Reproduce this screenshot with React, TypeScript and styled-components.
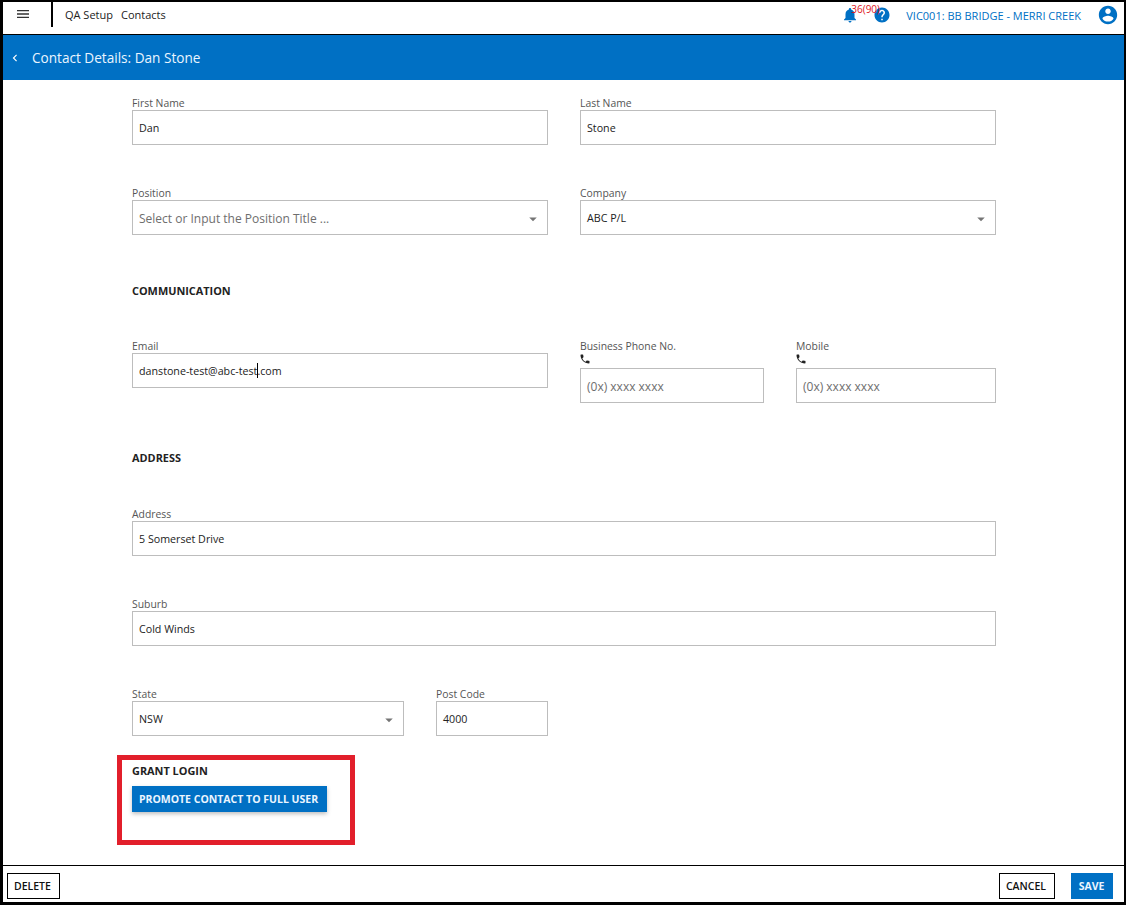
import React from 'react';
import styled, { createGlobalStyle } from 'styled-components';

const BLUE = '#0070c4';

const GlobalStyle = createGlobalStyle`
    html, body {
        margin: 0;
        padding: 0;
        background: #fff;
    }
    body {
        font-family: "Open Sans", "Noto Sans", "Liberation Sans", sans-serif;
        color: #222;
    }
`;

const icons = {
    menu: 'M3 18h18v-2H3v2zm0-5h18v-2H3v2zm0-7v2h18V6H3z',
    bell: 'M12 22c1.1 0 2-.9 2-2h-4c0 1.1.9 2 2 2zm6-6v-5c0-3.07-1.63-5.64-4.5-6.32V4c0-.83-.67-1.5-1.5-1.5s-1.5.67-1.5 1.5v.68C7.64 5.36 6 7.92 6 11v5l-2 2v1h16v-1l-2-2z',
    help: 'M12 2C6.48 2 2 6.48 2 12s4.48 10 10 10 10-4.48 10-10S17.52 2 12 2zm1 17h-2v-2h2v2zm2.07-7.75l-.9.92C13.45 12.9 13 13.5 13 15h-2v-.5c0-1.1.45-2.1 1.17-2.83l1.24-1.26c.37-.36.59-.86.59-1.41 0-1.1-.9-2-2-2s-2 .9-2 2H8c0-2.21 1.79-4 4-4s4 1.79 4 4c0 .88-.36 1.68-.93 2.25z',
    account: 'M12 2C6.48 2 2 6.48 2 12s4.48 10 10 10 10-4.48 10-10S17.52 2 12 2zm0 3c1.66 0 3 1.34 3 3s-1.34 3-3 3-3-1.34-3-3 1.34-3 3-3zm0 14.2c-2.5 0-4.71-1.28-6-3.22.03-1.99 4-3.08 6-3.08 1.99 0 5.97 1.09 6 3.08-1.29 1.94-3.5 3.22-6 3.22z',
    phone: 'M6.62 10.79c1.44 2.83 3.76 5.14 6.59 6.59l2.2-2.2c.27-.27.67-.36 1.02-.24 1.12.37 2.33.57 3.57.57.55 0 1 .45 1 1V20c0 .55-.45 1-1 1-9.39 0-17-7.61-17-17 0-.55.45-1 1-1h3.5c.55 0 1 .45 1 1 0 1.25.2 2.45.57 3.57.11.35.03.74-.25 1.02l-2.2 2.2z',
    back: 'M15.41 7.41L14 6l-6 6 6 6 1.41-1.41L10.83 12z',
    caret: 'M7 10l5 5 5-5z',
};

const Icon: React.FC<{ name: keyof typeof icons; size: number; color: string }> = ({ name, size, color }) => (
    <svg width={size} height={size} viewBox="0 0 24 24" fill={color} style={{ display: 'block' }}>
        <path d={icons[name]} />
    </svg>
);

const Field: React.FC<{
    label: string;
    value?: string;
    placeholder?: string;
    select?: boolean;
    phone?: boolean;
    width?: number;
    caretAfter?: string;
}> = ({ label, value, placeholder, select, phone, width, caretAfter }) => (
    <FieldWrap $width={width}>
        <Label>{label}</Label>
        {phone && (
            <PhoneMark>
                <Icon name="phone" size={12} color="#222" />
            </PhoneMark>
        )}
        <InputBox>
            {placeholder ? (
                <Placeholder>{placeholder}</Placeholder>
            ) : (
                <Value>
                    {caretAfter}
                    {caretAfter && <TextCaret />}
                    {value}
                </Value>
            )}
            {select && (
                <SelectMark>
                    <Icon name="caret" size={18} color="#757575" />
                </SelectMark>
            )}
        </InputBox>
    </FieldWrap>
);

const App: React.FC = () => (
    <>
        <GlobalStyle />
        <Frame>
            <TopBar>
                <MenuCell>
                    <Icon name="menu" size={16} color="#333" />
                </MenuCell>
                <Crumb>QA Setup</Crumb>
                <Crumb>Contacts</Crumb>
                <TopRight>
                    <BellWrap>
                        <Icon name="bell" size={18} color={BLUE} />
                        <BellCount>36(90)</BellCount>
                    </BellWrap>
                    <Icon name="help" size={18} color={BLUE} />
                    <SiteName>VIC001: BB BRIDGE - MERRI CREEK</SiteName>
                    <Icon name="account" size={22} color={BLUE} />
                </TopRight>
            </TopBar>
            <TitleBar>
                <Icon name="back" size={14} color="#fff" />
                <Title>Contact Details: Dan Stone</Title>
            </TitleBar>
            <Content>
                <Row $mb={42}>
                    <Field label="First Name" value="Dan" />
                    <Field label="Last Name" value="Stone" />
                </Row>
                <Row $mb={49}>
                    <Field label="Position" placeholder="Select or Input the Position Title ..." select />
                    <Field label="Company" value="ABC P/L" select />
                </Row>
                <SectionTitle $mb={42}>COMMUNICATION</SectionTitle>
                <Row $mb={48}>
                    <Field label="Email" value=".com" caretAfter="danstone-test@abc-test" />
                    <PhoneCols>
                        <Field label="Business Phone No." placeholder="(0x) xxxx xxxx" phone width={184} />
                        <Field label="Mobile" placeholder="(0x) xxxx xxxx" phone width={200} />
                    </PhoneCols>
                </Row>
                <SectionTitle $mb={43}>ADDRESS</SectionTitle>
                <Row $mb={42}>
                    <Field label="Address" value="5 Somerset Drive" />
                </Row>
                <Row $mb={42}>
                    <Field label="Suburb" value="Cold Winds" />
                </Row>
                <Row $mb={28}>
                    <HalfRow>
                        <Field label="State" value="NSW" select width={272} />
                        <Field label="Post Code" value="4000" width={112} />
                    </HalfRow>
                </Row>
                <GrantSection>
                    <Highlight />
                    <SectionTitle $mb={8}>GRANT LOGIN</SectionTitle>
                    <PromoteButton>PROMOTE CONTACT TO FULL USER</PromoteButton>
                </GrantSection>
            </Content>
            <Footer>
                <OutlineButton>DELETE</OutlineButton>
                <FooterRight>
                    <OutlineButton>CANCEL</OutlineButton>
                    <SaveButton>SAVE</SaveButton>
                </FooterRight>
            </Footer>
        </Frame>
    </>
);

export default App;

const Frame = styled.div`
    position: relative;
    width: 1126px;
    height: 905px;
    box-sizing: border-box;
    border-style: solid;
    border-color: #000;
    border-width: 2px 2px 3px 3px;
    display: flex;
    flex-direction: column;
    background: #fff;
    overflow: hidden;
`;

const TopBar = styled.header`
    height: 33px;
    flex: none;
    box-sizing: border-box;
    border-bottom: 1px solid #000;
    display: flex;
    align-items: flex-start;
    font-size: 11px;
    color: #222;
`;

const MenuCell = styled.div`
    width: 50px;
    height: 25px;
    flex: none;
    box-sizing: border-box;
    border-right: 2px solid #000;
    padding: 4px 0 0 12px;
    margin-right: 12px;
`;

const Crumb = styled.span`
    margin-right: 8px;
    line-height: 14px;
    padding-top: 6px;
`;

const TopRight = styled.div`
    margin-left: auto;
    display: flex;
    align-items: center;
    padding: 1px 5px 0 0;
    height: 24px;
`;

const BellWrap = styled.div`
    position: relative;
    margin-right: 14px;
`;

const BellCount = styled.span`
    position: absolute;
    left: 10px;
    top: -3px;
    font-size: 10px;
    line-height: 12px;
    color: #e0141c;
`;

const SiteName = styled.span`
    color: ${BLUE};
    font-size: 11px;
    font-weight: 500;
    margin: 0 16px 0 15px;
`;

const TitleBar = styled.div`
    height: 45px;
    flex: none;
    background: ${BLUE};
    display: flex;
    align-items: center;
    padding-left: 5px;
    box-sizing: border-box;
    color: #fff;
`;

const Title = styled.h1`
    margin: 0 0 0 10px;
    font-size: 13.6px;
    font-weight: 400;
    color: #eaf5ff;
`;

const Content = styled.main`
    flex: 1;
    padding: 17px 0 0 129px;
    width: 864px;
`;

const Row = styled.div<{ $mb: number }>`
    display: flex;
    gap: 32px;
    width: 864px;
    margin-bottom: ${(p) => p.$mb}px;
    align-items: flex-start;
`;

const HalfRow = styled.div`
    display: flex;
    gap: 32px;
    width: 416px;
`;

const PhoneCols = styled.div`
    display: flex;
    gap: 32px;
    flex: 1;
    min-width: 0;
`;

const FieldWrap = styled.div<{ $width?: number }>`
    flex: ${(p) => (p.$width ? `0 0 ${p.$width}px` : '1 1 0')};
    min-width: 0;
`;

const Label = styled.label`
    display: block;
    font-size: 10.4px;
    line-height: 13px;
    color: #555;
`;

const PhoneMark = styled.div`
    height: 15px;
    margin-left: -1px;
`;

const InputBox = styled.div`
    height: 35px;
    box-sizing: border-box;
    border: 1px solid #bdbdbd;
    display: flex;
    align-items: center;
    justify-content: space-between;
    padding: 0 5px 0 6px;
    font-size: 10.7px;
    color: #222;
    background: #fff;
`;

const Value = styled.span`
    white-space: nowrap;
`;

const TextCaret = styled.span`
    display: inline-block;
    width: 1px;
    height: 15px;
    margin-right: -1px;
    vertical-align: -3px;
    background: #000;
`;

const Placeholder = styled.span`
    font-size: 12px;
    color: #6e6e6e;
    white-space: nowrap;
    padding-top: 1px;
`;

const SelectMark = styled.div`
    padding-top: 2px;
`;

const SectionTitle = styled.h2<{ $mb: number }>`
    margin: 0 0 ${(p) => p.$mb}px;
    font-size: 10.9px;
    line-height: 14px;
    font-weight: 700;
    color: #222;
`;

const GrantSection = styled.section`
    position: relative;
    width: 195px;
`;

const Highlight = styled.div`
    position: absolute;
    left: -15px;
    top: -9px;
    width: 238px;
    height: 90px;
    box-sizing: border-box;
    border: 5px solid #e21f2b;
    pointer-events: none;
`;

const PromoteButton = styled.button`
    display: block;
    width: 195px;
    height: 26px;
    padding: 0 2px 0 0;
    border: 0;
    background: ${BLUE};
    color: #eaf5ff;
    font-family: inherit;
    font-size: 10.5px;
    font-weight: 700;
    box-shadow: 0 2px 4px rgba(0, 0, 0, 0.25);
`;

const Footer = styled.footer`
    height: 37px;
    flex: none;
    box-sizing: border-box;
    border-top: 1px solid #000;
    display: flex;
    justify-content: space-between;
    padding: 7px 11px 0 4px;
`;

const FooterRight = styled.div`
    display: flex;
    gap: 16px;
`;

const OutlineButton = styled.button`
    height: 26px;
    padding: 0 8px 0 6px;
    border: 1px solid #000;
    background: #fff;
    color: #111;
    font-family: inherit;
    font-size: 10.5px;
    font-weight: 600;
`;

const SaveButton = styled.button`
    width: 42px;
    height: 26px;
    padding: 0 1px 0 0;
    border: 0;
    background: ${BLUE};
    color: #eaf5ff;
    font-family: inherit;
    font-size: 10.5px;
    font-weight: 700;
`;
